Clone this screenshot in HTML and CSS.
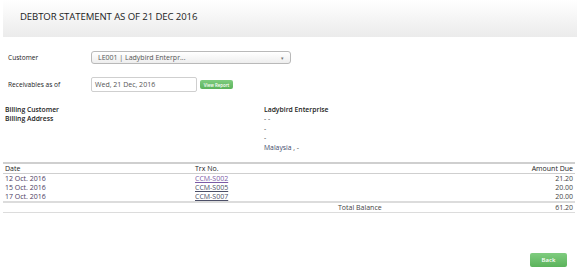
FILE: index.html
```html
<!DOCTYPE html>
<html lang="en">
<head>
    <meta charset="UTF-8">
    <title>Debtor Statement</title>
    <link rel="stylesheet" href="styles.css">
</head>
<body>
    <div class="header">
        <h1>DEBTOR STATEMENT AS OF 21 DEC 2016</h1>
    </div>

    <div class="filters">
        <div class="form-row">
            <label>Customer</label>
            <div class="select">
                <span>LE001 | Ladybird Enterpr...</span>
                <span class="caret">&#9662;</span>
            </div>
        </div>
        <div class="form-row">
            <label>Receivables as of</label>
            <div class="date-input">Wed, 21 Dec, 2016</div>
            <button class="btn btn-small">View Report</button>
        </div>
    </div>

    <div class="billing">
        <div class="billing-labels">
            <div>Billing Customer</div>
            <div>Billing Address</div>
        </div>
        <div class="billing-values">
            <div class="name">Ladybird Enterprise</div>
            <div>- -</div>
            <div>-</div>
            <div>-</div>
            <div><span class="country">Malaysia</span> , -</div>
        </div>
    </div>

    <table class="statement">
        <thead>
            <tr>
                <th class="col-date">Date</th>
                <th class="col-trx">Trx No.</th>
                <th class="col-amount">Amount Due</th>
            </tr>
        </thead>
        <tbody>
            <tr>
                <td>12 Oct. 2016</td>
                <td><a href="#" class="visited">CCM-S002</a></td>
                <td class="col-amount">21.20</td>
            </tr>
            <tr>
                <td>15 Oct. 2016</td>
                <td><a href="#">CCM-S005</a></td>
                <td class="col-amount">20.00</td>
            </tr>
            <tr>
                <td>17 Oct. 2016</td>
                <td><a href="#">CCM-S007</a></td>
                <td class="col-amount">20.00</td>
            </tr>
        </tbody>
        <tfoot>
            <tr>
                <td></td>
                <td class="total-label">Total Balance</td>
                <td class="col-amount">61.20</td>
            </tr>
        </tfoot>
    </table>

    <div class="actions">
        <button class="btn btn-back">Back</button>
    </div>
</body>
</html>
```

FILE: styles.css
```css
body {
    margin: 0;
    width: 577px;
    height: 273px;
    font-family: "Open Sans", Arial, sans-serif;
    color: #333;
    background: #fff;
}
.header {
    margin-left: 3px;
    height: 37px;
    background: linear-gradient(#ffffff, #ebebeb);
    display: flex;
    align-items: center;
    padding-left: 17px;
    padding-bottom: 5px;
    box-sizing: border-box;
}
h1 {
    margin: 0;
    font-size: 9.6px;
    font-weight: normal;
    color: #222;
    letter-spacing: -0.1px;
}
.filters {
    padding: 14px 0 0 8px;
}
.form-row {
    display: flex;
    align-items: center;
    margin-bottom: 13px;
}
.form-row label {
    width: 83px;
    font-size: 6.6px;
    color: #222;
}
.select {
    width: 200px;
    height: 13px;
    box-sizing: border-box;
    border: 1px solid #b9b9b9;
    border-radius: 3px;
    background: linear-gradient(#ffffff, #eeeeee);
    display: flex;
    align-items: center;
    justify-content: space-between;
    padding: 0 6px 0 6px;
    font-size: 7px;
    color: #555;
}
.caret {
    font-size: 5px;
    color: #777;
}
.date-input {
    width: 106px;
    height: 15px;
    box-sizing: border-box;
    border: 1px solid #cfcfcf;
    border-radius: 2px;
    padding-left: 3px;
    display: flex;
    align-items: center;
    font-size: 7px;
    color: #555;
}
.btn {
    border: none;
    color: white;
    font-family: "Open Sans", Arial, sans-serif;
    background: linear-gradient(#7fcc7f, #5bb35b);
    border-radius: 2px;
    padding: 0;
    cursor: pointer;
}
.btn-small {
    margin-left: 3px;
    width: 33px;
    height: 9px;
    font-size: 4.4px;
    font-weight: 600;
}
.billing {
    display: flex;
    margin-top: 9px;
    font-size: 6.8px;
    line-height: 9.4px;
}
.billing-labels {
    width: 259px;
    padding-left: 5px;
    font-weight: 600;
    color: #222;
}
.billing-values .name {
    font-weight: 600;
    color: #222;
}
.billing-values {
    color: #444;
}
.country {
    color: #3d4a6a;
}
.statement {
    margin: 10px 2px 0 3px;
    width: 572px;
    border-collapse: collapse;
    font-size: 7px;
}
.statement th,
.statement td {
    padding: 0 2px;
    height: 9px;
    line-height: 9px;
    text-align: left;
}
.statement thead th {
    font-weight: normal;
    color: #222;
    border-top: 2px solid #cfcfcf;
    border-bottom: 1px solid #cfcfcf;
}
.statement tbody td {
    color: #4a3a5e;
}
.statement tbody td.col-amount {
    color: #444;
}
.statement tbody tr:last-child td {
    border-bottom: 2px solid #dcdcdc;
}
.statement tfoot td {
    color: #444;
    border-bottom: 1px solid #dcdcdc;
}
.col-date {
    width: 186px;
}
.statement .col-amount {
    text-align: right;
}
.statement .total-label {
    padding-left: 145px;
}
a {
    color: #4c5068;
}
a.visited {
    color: #7b5aa6;
}
.actions {
    display: flex;
    justify-content: flex-end;
    padding: 40px 10px 0 0;
}
.btn-back {
    width: 37px;
    height: 14px;
    font-size: 6px;
    font-weight: 600;
}
```
